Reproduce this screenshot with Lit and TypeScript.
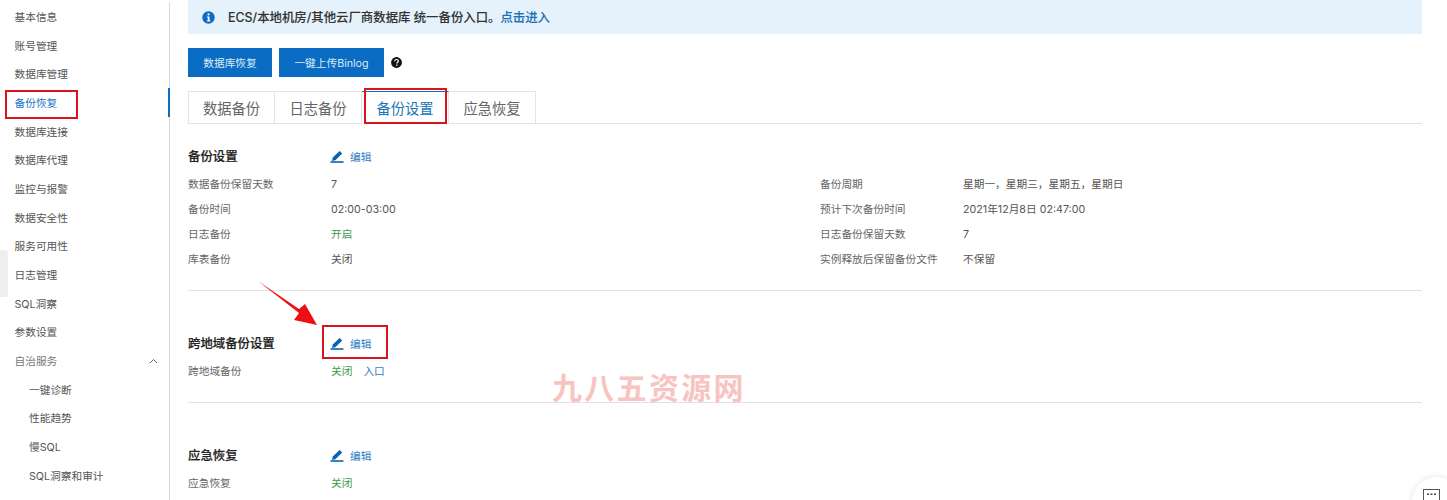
import { LitElement, html, css, svg } from "lit";
import { customElement } from "lit/decorators.js";

const NAV = [
  ["基本信息"], ["账号管理"], ["数据库管理"], ["备份恢复", "active"], ["数据库连接"], ["数据库代理"],
  ["监控与报警"], ["数据安全性"], ["服务可用性"], ["日志管理"], ["SQL洞察"], ["参数设置"],
  ["自治服务", "group"], ["一键诊断", "sub"], ["性能趋势", "sub"], ["慢SQL", "sub"], ["SQL洞察和审计", "sub"], ["诊断报告", "sub"],
];

const pencil = html`<svg class="pen" width="14" height="13" viewBox="0 0 14 13" aria-hidden="true">
  <path d="M2.8 7.6 9.6 1l2.6 2.6-6.8 6.6-3.4.7z" fill="#0a62b0"></path>
  <rect x="0.5" y="11.2" width="13" height="1.6" fill="#0a62b0"></rect>
</svg>`;

@customElement("app-root")
export class AppRoot extends LitElement {
  static styles = css`
    :host { display: block; position: relative; width: 1447px; height: 500px; overflow: hidden; background: #fff;
      font-family: Inter, "Noto Sans CJK SC", sans-serif; font-size: 10.7px; color: #666; }
    .page { display: flex; height: 500px; }
    .side { position: relative; flex: none; box-sizing: border-box; width: 170px; margin-top: 2px; border-right: 1px solid #d8d8d8; }
    .nav { display: flex; align-items: center; height: 28.7px; padding-left: 14.5px; padding-right: 11px; color: #555; white-space: nowrap; }
    .nav.active { color: #1a76c4; }
    .nav.group { color: #777; justify-content: space-between; }
    .nav.sub { padding-left: 29px; }
    .indicator { position: absolute; right: -1px; top: 86px; width: 2px; height: 29px; background: #0a6fc4; }
    .handle { position: absolute; left: 0; top: 250px; width: 8px; height: 47px; background: #eeeeee; display: flex; align-items: center; border-radius: 0 3px 3px 0; }
    main { flex: 1; box-sizing: border-box; padding: 0 25px 0 18px; min-width: 0; }
    .banner { display: flex; align-items: center; gap: 13px; height: 34px; background: #e6f2fb; padding-left: 14px; color: #333; font-size: 12.4px; font-weight: 500; -webkit-text-stroke: 0.1px #333; }
    .banner a { color: #1a6fb8; -webkit-text-stroke: 0.1px #1a6fb8; }
    .actions { display: flex; align-items: center; gap: 7px; margin-top: 14px; height: 29px; }
    .btn { display: flex; align-items: center; justify-content: center; height: 29px; background: #0a6cc2; color: #dcebf8; font-size: 10.7px; }
    .btn.a { width: 84px; }
    .btn.b { width: 105px; }
    .help { display: flex; }
    .tabs { display: flex; margin-top: 14px; height: 33px; box-sizing: border-box; border-bottom: 1px solid #e2e2e2; }
    .tab { display: flex; align-items: center; justify-content: center; box-sizing: border-box; width: 87px; height: 33px; border: 1px solid #e4e4e4; border-left: 0; font-size: 14.3px; color: #666; }
    .tab:first-child { border-left: 1px solid #e4e4e4; }
    .tab.on { color: #1a76b8; border-top: 1px solid #0a6cc2; border-bottom-color: #fff; }
    .head { display: grid; grid-template-columns: 142px auto; align-items: center; height: 20px; }
    .head b { font-size: 12.4px; font-weight: 500; color: #222; -webkit-text-stroke: 0.2px #222; }
    .edit { display: flex; align-items: center; gap: 6px; color: #2f7cc4; }
    .grid { display: grid; grid-template-columns: 632px 1fr; margin-top: 6px; }
    .row { display: grid; grid-template-columns: 143px 1fr; align-items: center; height: 25px; line-height: 16px; }
    .val { color: #555; }
    .green { color: #3f9a4e; }
    .link { color: #2f7cc4; margin-left: 11px; }
    .sec1 { margin-top: 22px; }
    hr { border: 0; height: 1px; background: #e2e2e2; margin: 0; }
    .hr1 { margin-top: 18px; }
    .sec2 { margin-top: 42px; }
    .hr2 { margin-top: 18px; }
    .sec3 { margin-top: 42px; }
    .mark { position: absolute; box-sizing: border-box; border: 2px solid #d9141e; pointer-events: none; }
    .m1 { left: 5px; top: 90px; width: 73px; height: 29px; }
    .m2 { left: 364px; top: 88px; width: 83px; height: 36px; }
    .m3 { left: 322px; top: 325px; width: 66px; height: 34px; }
    .arrow { position: absolute; left: 250px; top: 275px; }
    .water { position: absolute; left: 552px; top: 370px; font-size: 30px; line-height: 36px; font-weight: 700; color: #f8c4c2; white-space: nowrap; letter-spacing: 2.3px; }
    .fb { position: absolute; left: 1412px; top: 477px; width: 50px; height: 50px; border-radius: 50%; background: #fff; box-shadow: 0 0 6px rgba(0,0,0,.12); }
    .fb svg { position: absolute; left: 11px; top: 12px; }
  `;

  private row(label: string, value: unknown, cls = "val") {
    return html`<div class="row"><span>${label}</span><span class=${cls}>${value}</span></div>`;
  }

  private head(title: string) {
    return html`<div class="head"><b>${title}</b><span class="edit">${pencil}编辑</span></div>`;
  }

  render() {
    return html`
      <div class="page">
        <aside class="side">
          ${NAV.map(([t, c]) => html`<div class="nav ${c ?? ""}">
            <span>${t}</span>
            ${c === "group" ? html`<svg width="9" height="6" viewBox="0 0 9 6" aria-hidden="true"><path d="M1 5l3.5-3.5L8 5" fill="none" stroke="#666" stroke-width="1"></path></svg>` : ""}
          </div>`)}
          <div class="indicator"></div>
        </aside>
        <main>
          <div class="banner">
            <svg width="13" height="13" viewBox="0 0 13 13" aria-hidden="true">
              <circle cx="6.5" cy="6.5" r="6.2" fill="#0a6cc2"></circle>
              <rect x="5.6" y="2.4" width="1.9" height="1.9" fill="#fff"></rect>
              <path d="M4.8 5.4h2.7v4h1v1.1H4.8V9.4h1V6.5h-1z" fill="#fff"></path>
            </svg>
            <span>ECS/本地机房/其他云厂商数据库 统一备份入口。<a>点击进入</a></span>
          </div>
          <div class="actions">
            <div class="btn a">数据库恢复</div>
            <div class="btn b">一键上传Binlog</div>
            <span class="help">
              <svg width="11" height="11" viewBox="0 0 11 11" aria-hidden="true">
                <circle cx="5.5" cy="5.5" r="5.4" fill="#111"></circle>
                <path d="M3.7 4.2c.1-1.1.9-1.7 1.9-1.7s1.8.6 1.8 1.5c0 1.2-1.5 1.3-1.5 2.5" fill="none" stroke="#fff" stroke-width="1.2"></path>
                <rect x="5.2" y="7.5" width="1.3" height="1.3" fill="#fff"></rect>
              </svg>
            </span>
          </div>
          <div class="tabs">
            <div class="tab">数据备份</div>
            <div class="tab">日志备份</div>
            <div class="tab on">备份设置</div>
            <div class="tab">应急恢复</div>
          </div>
          <section class="sec1">
            ${this.head("备份设置")}
            <div class="grid">
              ${this.row("数据备份保留天数", "7")}
              ${this.row("备份周期", "星期一，星期三，星期五，星期日")}
              ${this.row("备份时间", "02:00-03:00")}
              ${this.row("预计下次备份时间", "2021年12月8日 02:47:00")}
              ${this.row("日志备份", "开启", "green")}
              ${this.row("日志备份保留天数", "7")}
              ${this.row("库表备份", "关闭")}
              ${this.row("实例释放后保留备份文件", "不保留")}
            </div>
          </section>
          <hr class="hr1" />
          <section class="sec2">
            ${this.head("跨地域备份设置")}
            <div class="grid">
              ${this.row("跨地域备份", html`<span class="green">关闭</span><span class="link">入口</span>`, "")}
            </div>
          </section>
          <hr class="hr2" />
          <section class="sec3">
            ${this.head("应急恢复")}
            <div class="grid">
              ${this.row("应急恢复", "关闭", "green")}
            </div>
          </section>
        </main>
      </div>
      <div class="handle"></div>
      <div class="mark m1"></div>
      <div class="mark m2"></div>
      <div class="mark m3"></div>
      <svg class="arrow" width="72" height="55" viewBox="0 0 72 55" aria-hidden="true">
        ${svg`<path d="M8 6 49 34l6-5 12 21-23-5 5-7z" fill="#ee0f14"></path>`}
      </svg>
      <div class="water">九八五资源网</div>
      <div class="fb">
        <svg width="17" height="16" viewBox="0 0 17 16" aria-hidden="true">
          <rect x="0.5" y="0.5" width="16" height="15" fill="none" stroke="#555"></rect>
          <rect x="4" y="4.5" width="2" height="1.5" fill="#444"></rect>
          <rect x="7.5" y="4.5" width="2" height="1.5" fill="#444"></rect>
          <rect x="11" y="4.5" width="2" height="1.5" fill="#444"></rect>
        </svg>
      </div>
    `;
  }
}
